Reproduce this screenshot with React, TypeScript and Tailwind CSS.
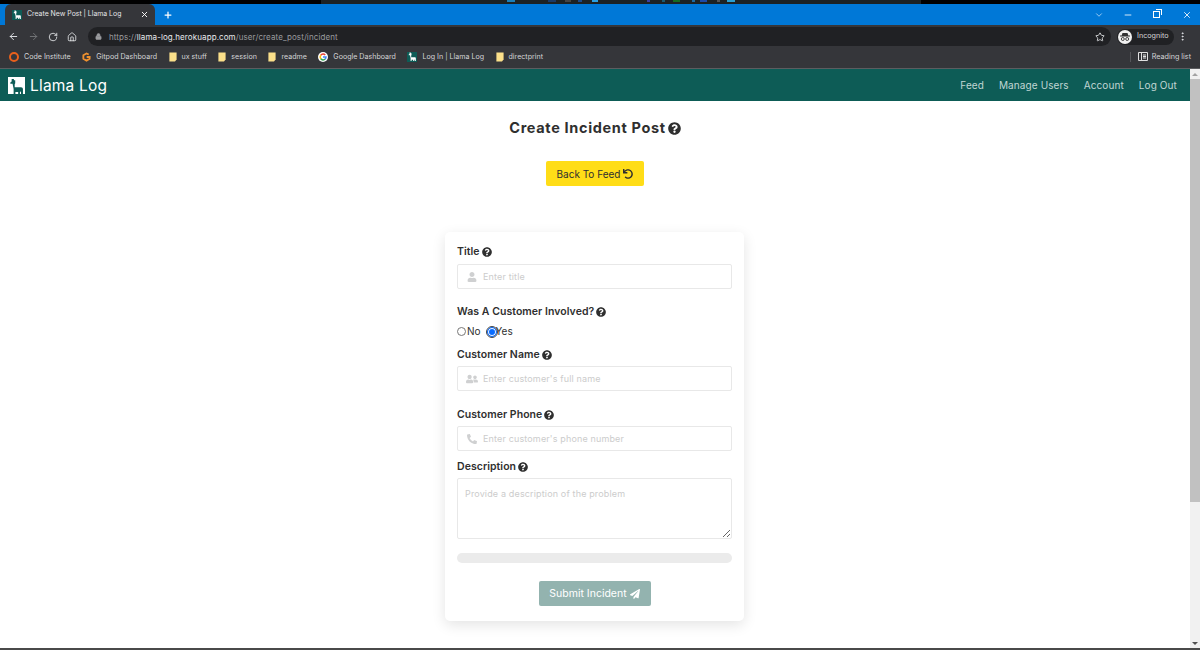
import { FaQuestionCircle, FaUndo, FaUser, FaUserFriends, FaPhoneAlt, FaPaperPlane } from "react-icons/fa";
import { ArrowLeft, ArrowRight, RotateCw, Home, Lock, Star, X, Plus, Minus, ChevronDown, MoreVertical } from "lucide-react";

const Llama = ({ className, fill }: { className: string; fill: string }) => (
  <svg viewBox="0 0 18 18" className={className}>
    <path fill={fill} d="M3 1h2.5v1.5H7V6l-.6 1v3.5h7.1c1.5 0 2.2 1 2.2 2.2V18h-2.2v-3.2l-1.2 1.2V18h-2v-2.3H7.2V18h-2v-5.5L4 6.5H1.5V5L3 4z" />
  </svg>
);

const Folder = () => (
  <svg viewBox="0 0 10 12" className="w-[8px] h-[10px] shrink-0">
    <path fill="#fbe08a" d="M0.5 0.5h9v8.5l-2 2.5h-7z" />
  </svg>
);

const Bookmark = ({ icon, label }: { icon: React.ReactNode; label: string }) => (
  <div className="flex items-center gap-[5px]">
    {icon}
    <span className="text-[7.1px] text-[#d4d5d7] whitespace-nowrap">{label}</span>
  </div>
);

const Help = ({ size = 10 }: { size?: number }) => <FaQuestionCircle size={size} color="#2f2f2f" className="shrink-0" />;

const Label = ({ text, mb }: { text: string; mb: string }) => (
  <div className={`flex items-center gap-[2px] h-[14px] ${mb}`}>
    <span className="text-[10.5px] font-semibold tracking-[0.05px] text-[#2f2f2f] whitespace-nowrap">{text}</span>
    <Help />
  </div>
);

const Field = ({ icon, placeholder }: { icon: React.ReactNode; placeholder: string }) => (
  <div className="relative h-[25px]">
    <span className="absolute left-[8px] top-0 h-full w-[13px] flex items-center justify-center text-[#cfd0d1]">{icon}</span>
    <input
      placeholder={placeholder}
      className="block w-full h-full border border-[#e8e8e8] rounded-[2px] pl-[25px] text-[9px] tracking-[0.15px] outline-none placeholder:text-[#cccccc] bg-white"
    />
  </div>
);

export default function App() {
  return (
    <div className="w-[1200px] h-[650px] overflow-hidden flex flex-col bg-white font-['Inter','Liberation_Sans',sans-serif]">
      {/* Desktop strip */}
      <div className="h-[4px] bg-black flex shrink-0">
        <div className="ml-[321px] w-[600px] h-full bg-[#1c2224] flex items-start">
          <span className="ml-[186px] w-[8px] h-[2px] bg-[#1c7fb8]" />
          <span className="ml-[33px] w-[8px] h-[2px] bg-[#1b3a66]" />
          <span className="ml-[9px] w-[6px] h-[2px] bg-[#444444]" />
          <span className="ml-[7px] w-[4px] h-[2px] bg-[#1d4a88]" />
          <span className="ml-[10px] w-[6px] h-[2px] bg-[#2b9fe0]" />
          <span className="ml-[49px] w-[3px] h-[2px] bg-[#3a3fa0]" />
          <span className="ml-[12px] w-[3px] h-[2px] bg-[#1a5a70]" />
          <span className="ml-[8px] w-[7px] h-[2px] bg-[#156a20]" />
          <span className="ml-[12px] w-[3px] h-[2px] bg-[#1d6aa0]" />
          <span className="ml-[5px] w-[7px] h-[2px] bg-[#1d4aa8]" />
          <span className="ml-[10px] w-[3px] h-[2px] bg-[#555555]" />
          <span className="ml-[7px] w-[8px] h-[2px] bg-[#2b9fd0]" />
        </div>
      </div>

      {/* Tab strip */}
      <div className="h-[21px] bg-[#0078d7] flex items-end shrink-0 pl-[5px]">
        <div className="w-[150px] h-[21px] bg-[#35363a] rounded-t-[6px] flex items-center pl-[7px] pr-[6px]">
          <div className="w-[10px] h-[10px] bg-[#0d5c56] flex items-center justify-center mr-[5px]">
            <Llama className="w-[9px] h-[9px]" fill="#fff" />
          </div>
          <span className="text-[6.9px] text-[#e4e5e7] whitespace-nowrap">Create New Post | Llama Log</span>
          <X size={9} color="#fff" strokeWidth={2.5} className="ml-auto" />
        </div>
        <Plus size={10} color="#fff" strokeWidth={3} className="ml-[8px] mb-[5px]" />
        <div className="ml-auto flex items-center h-full">
          <ChevronDown size={10} color="#b8d8f4" className="mr-[19px]" />
          <Minus size={10} color="#fff" className="mr-[20px]" />
          <div className="relative w-[7px] h-[7px] border border-white mr-[22px]">
            <span className="absolute -top-[3px] -right-[3px] w-[6px] h-[6px] border-t border-r border-white" />
          </div>
          <X size={10} color="#fff" className="mr-[8px]" />
        </div>
      </div>

      {/* Toolbar */}
      <div className="h-[21px] pt-[2px] bg-[#35363a] flex items-center shrink-0">
        <div className="w-[88px] flex items-center gap-[9px] pl-[8px] shrink-0">
          <ArrowLeft size={11} color="#e8eaed" />
          <ArrowRight size={11} color="#75777a" />
          <RotateCw size={10} color="#e8eaed" />
          <Home size={10} color="#e8eaed" />
        </div>
        <div className="w-[1023px] h-[19px] rounded-full bg-[#202124] flex items-center pl-[7px] pr-[6px] shrink-0">
          <Lock size={7} color="#9a9b9e" fill="#9a9b9e" className="mr-[7px]" />
          <span className="text-[8px] tracking-[0.1px] text-[#9a9b9e] whitespace-nowrap">
            https://<span className="text-[#e8eaed]">llama-log.herokuapp.com</span>/user/create_post/incident
          </span>
          <Star size={10} color="#e8eaed" className="ml-auto" />
        </div>
        <div className="ml-[6px] w-[57px] h-[16px] rounded-full bg-[#202124] flex items-center pl-[1px] shrink-0">
          <svg viewBox="0 0 14 14" className="w-[14px] h-[14px] shrink-0">
            <circle cx="7" cy="7" r="7" fill="#f1f1f1" />
            <path fill="#333" d="M4.5 3h5l.8 2.6H12v.8H2v-.8h1.700z" />
            <circle cx="4.800" cy="9" r="1.500" fill="none" stroke="#333" strokeWidth="0.900" />
            <circle cx="9.200" cy="9" r="1.500" fill="none" stroke="#333" strokeWidth="0.900" />
          </svg>
          <span className="ml-[5px] text-[7.2px] text-[#d4d5d7]">Incognito</span>
        </div>
        <MoreVertical size={11} color="#e8eaed" className="ml-[3px]" />
      </div>

      {/* Bookmarks */}
      <div className="h-[22px] bg-[#35363a] border-b border-[#5c5d60] box-content flex items-center shrink-0 pl-[9px] gap-[11.5px]">
        <Bookmark icon={<span className="w-[10px] h-[10px] rounded-full border-2 border-[#e8601c]" />} label="Code Institute" />
        <Bookmark
          icon={
            <svg viewBox="0 0 10 10" className="w-[9px] h-[10px] shrink-0">
              <path fill="none" stroke="#f0912e" strokeWidth="2" d="M7.500 2.200L5 1 1.500 3v4L5 9l3.500-2V5H5.200" />
            </svg>
          }
          label="Gitpod Dashboard"
        />
        <Bookmark icon={<Folder />} label="ux stuff" />
        <Bookmark icon={<Folder />} label="session" />
        <Bookmark icon={<Folder />} label="readme" />
        <Bookmark
          icon={
            <svg viewBox="0 0 20 20" className="w-[10px] h-[10px] shrink-0">
              <circle cx="10" cy="10" r="10" fill="#fff" />
              <path d="M5.500 6.500a6 6 0 0 1 9-.6" stroke="#ea4335" strokeWidth="3" fill="none" />
              <path d="M5.500 6.500a6 6 0 0 0 0 7" stroke="#fbbc05" strokeWidth="3" fill="none" />
              <path d="M5.500 13.500a6 6 0 0 0 9 .5" stroke="#34a853" strokeWidth="3" fill="none" />
              <path d="M10 10h6a6 6 0 0 1-1.500 4" stroke="#4285f4" strokeWidth="3" fill="none" />
            </svg>
          }
          label="Google Dashboard"
        />
        <Bookmark
          icon={
            <span className="w-[10px] h-[10px] bg-[#0d5c56] flex items-center justify-center">
              <Llama className="w-[9px] h-[9px]" fill="#fff" />
            </span>
          }
          label="Log In | Llama Log"
        />
        <Bookmark icon={<Folder />} label="directprint" />
        <div className="ml-auto flex items-center pr-[9px]">
          <div className="w-px h-[10px] bg-[#55565a] mr-[7px]" />
          <svg viewBox="0 0 10 9" className="w-[10px] h-[9px] mr-[4px]">
            <path fill="none" stroke="#e0e0e0" d="M.5.500h9v8h-9zM3.500.500v8M5 3h3M5 4.500h3M5 6h3" />
          </svg>
          <span className="text-[7.2px] text-[#d4d5d7] whitespace-nowrap">Reading list</span>
        </div>
      </div>

      {/* Page + scrollbar */}
      <div className="flex-1 min-h-0 flex border-b-2 border-[#4a4a4a]">
        <div className="flex-1 min-w-0 flex flex-col">
          <nav className="h-[32px] pt-[1px] bg-[#0d5c56] flex items-center shrink-0 pl-[8px] pr-[13px]">
            <div className="w-[17px] h-[17px] bg-white flex items-end justify-center mr-[5px]">
              <Llama className="w-[16px] h-[16px]" fill="#0d5c56" />
            </div>
            <span className="text-[15.5px] font-normal text-white tracking-[0.2px]">Llama Log</span>
            <div className="ml-auto flex items-center gap-[15px] text-[10px] tracking-[0.1px] text-[#c0d6d4]">
              <span>Feed</span>
              <span>Manage Users</span>
              <span>Account</span>
              <span>Log Out</span>
            </div>
          </nav>

          <div className="flex flex-col items-center">
            <div className="mt-[18px] h-[18px] flex items-center gap-[2px]">
              <h1 className="text-[14.5px] font-bold tracking-[0.65px] text-[#2f2f2f] whitespace-nowrap">Create Incident Post</h1>
              <Help size={13} />
            </div>
            <button className="mt-[24px] w-[98px] h-[25px] pt-[1px] bg-[#ffdd17] rounded-[2px] flex items-center justify-center gap-[3px] text-[10px] text-[#2f2f2f]">
              Back To Feed <FaUndo size={10} />
            </button>

            <div className="mt-[46px] mr-[1px] w-[299px] h-[389px] rounded-[5px] bg-white shadow-[0_4px_14px_rgba(0,0,0,0.11)] px-[12px] pt-[13px] flex flex-col">
              <Label text="Title" mb="mb-[5px]" />
              <Field icon={<FaUser size={10} />} placeholder="Enter title" />

              <div className="mt-[16px]" />
              <Label text="Was A Customer Involved?" mb="mb-[6px]" />
              <div className="h-[13px] flex items-center text-[10px] text-[#2f2f2f]">
                <span className="w-[9px] h-[9px] rounded-full border border-[#777] bg-white" />
                <span className="ml-[1px]">No</span>
                <span className="ml-[6px] w-[10px] h-[10px] rounded-full border border-[#0a6cff] bg-[#0a6cff] outline outline-1 outline-[#444] shadow-[inset_0_0_0_1px_#fff]" />
                <span className="-ml-[1px]">Yes</span>
              </div>

              <div className="mt-[10px]" />
              <Label text="Customer Name" mb="mb-[4px]" />
              <Field icon={<FaUserFriends size={12} />} placeholder="Enter customer's full name" />

              <div className="mt-[17px]" />
              <Label text="Customer Phone" mb="mb-[4px]" />
              <Field icon={<FaPhoneAlt size={10} />} placeholder="Enter customer's phone number" />

              <div className="mt-[9px]" />
              <Label text="Description" mb="mb-[4px]" />
              <textarea
                placeholder="Provide a description of the problem"
                className="block w-full h-[61px] border border-[#e8e8e8] rounded-[2px] px-[7px] py-[8px] text-[9px] tracking-[0.15px] outline-none placeholder:text-[#cccccc]"
              />

              <div className="mt-[14px] h-[10px] rounded-full bg-[#ebebeb]" />

              <button className="mt-[18px] self-center w-[112px] h-[25px] pt-[1px] rounded-[2px] bg-[#93b3af] flex items-center justify-center gap-[3px] text-[10.5px] text-white">
                Submit Incident <FaPaperPlane size={10} />
              </button>
            </div>
          </div>
        </div>

        {/* Scrollbar */}
        <div className="w-[10px] bg-[#f1f1f1] flex flex-col items-center shrink-0">
          <div className="h-[10px] flex items-center justify-center">
            <span className="border-x-[3px] border-x-transparent border-b-[3px] border-b-[#a3a3a3]" />
          </div>
          <div className="w-full h-[423px] bg-[#c1c1c1]" />
          <div className="mt-auto h-[10px] flex items-center justify-center">
            <span className="border-x-[3px] border-x-transparent border-t-[3px] border-t-[#505050]" />
          </div>
        </div>
      </div>
    </div>
  );
}
